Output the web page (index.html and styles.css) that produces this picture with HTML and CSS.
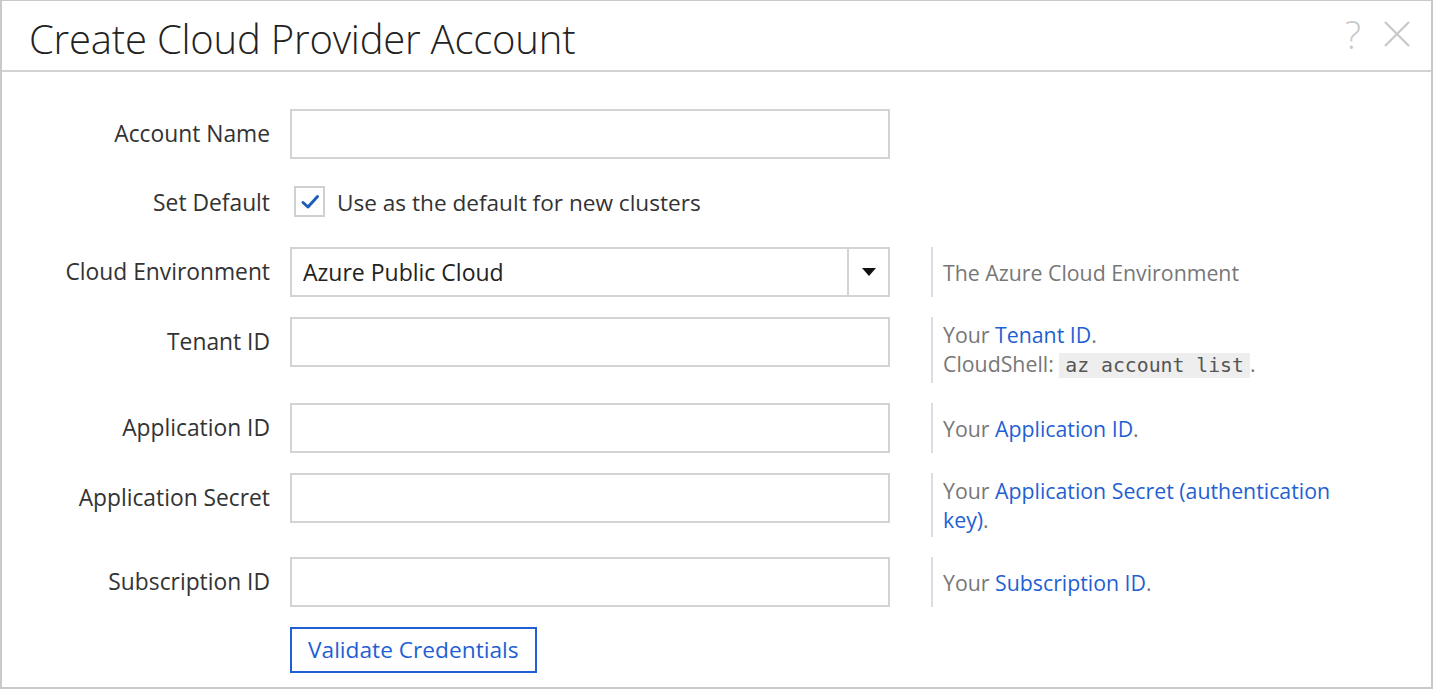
FILE: index.html
```html
<!DOCTYPE html>
<html lang="en">
<head>
<meta charset="utf-8">
<title>Create Cloud Provider Account</title>
<link rel="stylesheet" href="styles.css">
</head>
<body>
<div class="dialog">
  <header class="dialog-header">
    <h1 class="dialog-title">Create Cloud Provider Account</h1>
    <div class="header-actions">
      <span class="help-icon">?</span>
      <svg class="close-icon" width="28" height="28" viewBox="0 0 28 28"><path d="M2 2 L26 26 M26 2 L2 26" stroke="#c8c8c8" stroke-width="2.2" fill="none"/></svg>
    </div>
  </header>
  <div class="dialog-body">
    <div class="form">
      <label class="label">Account Name</label>
      <div class="field"><div class="input"></div></div>
      <div class="help empty"></div>

      <label class="label row-default">Set Default</label>
      <div class="field row-default check-field">
        <span class="checkbox"><svg width="22" height="22" viewBox="0 0 22 22"><path d="M4 11.5 L9 16 L18.5 5.5" stroke="#1f5eb8" stroke-width="3" fill="none" stroke-linecap="round" stroke-linejoin="round"/></svg></span>
        <span class="check-text">Use as the default for new clusters</span>
      </div>
      <div class="help row-default empty"></div>

      <label class="label">Cloud Environment</label>
      <div class="field"><div class="select"><span class="select-value">Azure Public Cloud</span><span class="select-btn"><svg width="14" height="8" viewBox="0 0 14 8"><path d="M0 0 H14 L7 8 Z" fill="#111"/></svg></span></div></div>
      <div class="help bar"><p class="help-text">The Azure Cloud Environment</p></div>

      <label class="label">Tenant ID</label>
      <div class="field"><div class="input"></div></div>
      <div class="help bar multi"><p class="help-text">Your <a href="#">Tenant ID</a>.<br>CloudShell: <code>az account list</code>.</p></div>

      <label class="label">Application ID</label>
      <div class="field"><div class="input"></div></div>
      <div class="help bar"><p class="help-text">Your <a href="#">Application ID</a>.</p></div>

      <label class="label">Application Secret</label>
      <div class="field"><div class="input"></div></div>
      <div class="help bar multi"><p class="help-text">Your <a href="#">Application Secret (authentication</a><br><a href="#">key)</a>.</p></div>

      <label class="label">Subscription ID</label>
      <div class="field"><div class="input"></div></div>
      <div class="help bar"><p class="help-text">Your <a href="#">Subscription ID</a>.</p></div>

      <div class="label"></div>
      <div class="field"><button class="btn">Validate Credentials</button></div>
      <div class="help empty"></div>
    </div>
  </div>
</div>
</body>
</html>
```

FILE: styles.css
```css
* { box-sizing: border-box; }
html, body { margin: 0; padding: 0; background: #fff; }
body {
  font-family: "Open Sans", "Noto Sans", sans-serif;
  color: #333;
  width: 1433px;
  height: 689px;
  overflow: hidden;
}
.dialog {
  width: 1433px;
  height: 689px;
  border: 2px solid #c9c9c9;
  border-top-width: 1px;
  display: flex;
  flex-direction: column;
}
.dialog-header {
  height: 71px;
  border-bottom: 2px solid #d2d2d2;
  display: flex;
  align-items: center;
  justify-content: space-between;
  padding: 8px 20px 0 27px;
  flex: none;
}
.dialog-title {
  margin: 0;
  font-weight: 300;
  font-size: 40px;
  color: #222;
  letter-spacing: -0.2px;
  line-height: 1;
  padding-bottom: 2px;
}
.header-actions {
  display: flex;
  align-items: center;
  gap: 22px;
  margin-top: -12px;
}
.help-icon {
  font-size: 38px;
  font-weight: 300;
  color: #c8c8c8;
  line-height: 1;
}
.form {
  display: grid;
  grid-template-columns: 268px 600px 452px;
  column-gap: 20px;
  row-gap: 20px;
  padding-top: 37px;
  align-items: start;
}
.label {
  text-align: right;
  font-size: 22.8px;
  color: #333;
  line-height: 50px;
  height: 50px;
}
.field { min-height: 50px; }
.input {
  height: 50px;
  border: 2px solid #d3d3d3;
  background: #fff;
}
.label.row-default, .field.row-default, .help.row-default { height: 48px; min-height: 48px; line-height: 48px; }
.check-field {
  display: flex;
  align-items: center;
  gap: 12px;
  padding-left: 4px;
}
.checkbox {
  width: 31px;
  height: 31px;
  border: 2px solid #d0d0d0;
  display: flex;
  align-items: center;
  justify-content: center;
  margin-top: -3px;
}
.check-text { font-size: 22.6px; color: #333; }
.select {
  height: 50px;
  border: 2px solid #d3d3d3;
  display: flex;
  align-items: stretch;
}
.select-value {
  flex: 1;
  font-size: 23px;
  color: #222;
  line-height: 46px;
  padding-left: 11px;
}
.select-btn {
  width: 41px;
  border-left: 2px solid #d3d3d3;
  display: flex;
  align-items: center;
  justify-content: center;
}
.help {
  font-size: 21.3px;
  color: #777;
  line-height: 29px;
  margin-left: 21px;
}
.help.bar {
  border-left: 2px solid #d9dde6;
  padding: 0 0 0 10px;
  min-height: 50px;
  max-width: 400px;
  display: flex;
  flex-direction: column;
  justify-content: center;
}
.help.bar.multi {
  justify-content: flex-start;
  padding-top: 3px;
  padding-bottom: 3px;
}
.help-text { margin: 0; }
.help a { color: #1f5fd3; text-decoration: none; }
code {
  font-family: "DejaVu Sans Mono", "Liberation Mono", monospace;
  font-size: 19.8px;
  background: #eeeeee;
  color: #555;
  padding: 1px 6px;
}
.btn {
  font-family: "Open Sans", "Noto Sans", sans-serif;
  font-size: 22.7px;
  color: #1f5fd3;
  background: #fff;
  border: 2px solid #1f5fd3;
  height: 46px;
  padding: 0 16px;
  cursor: pointer;
  line-height: 1;
}
```
